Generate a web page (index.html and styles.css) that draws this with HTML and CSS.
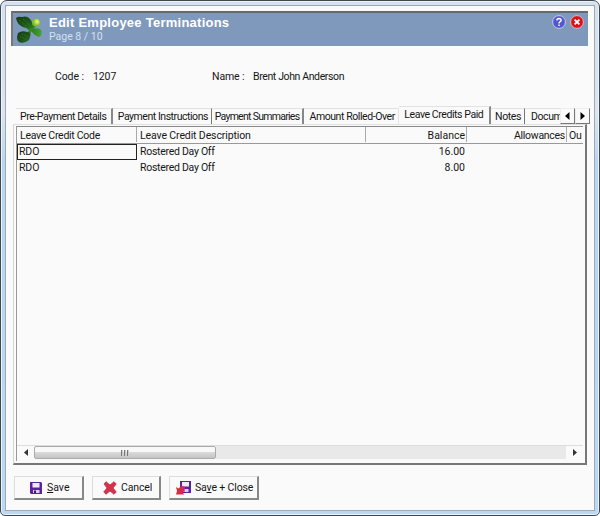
FILE: index.html
```html
<!DOCTYPE html>
<html lang="en">
<head>
<meta charset="utf-8">
<title>Edit Employee Terminations</title>
<link rel="stylesheet" href="styles.css">
</head>
<body>
<div class="window">
<main class="client">
  <header class="banner">
    <svg class="logo" viewBox="0 0 28 30">
      <defs>
        <linearGradient id="leaf" x2="1" y2="1"><stop offset="0" stop-color="#17391a"/><stop offset=".6" stop-color="#1d5618"/><stop offset="1" stop-color="#2d7d20"/></linearGradient>
        <radialGradient id="ball" cx=".65" cy=".4"><stop offset="0" stop-color="#f8ff55"/><stop offset="1" stop-color="#7fc02a"/></radialGradient>
        <linearGradient id="stem"><stop offset="0" stop-color="#1f6a1a"/><stop offset="1" stop-color="#46a32b"/></linearGradient>
      </defs>
      <path d="M12 11Q17 13 20 14.500Q25 13.500 26.500 17Q27 22 24 23Q20 22 17 18Q14 16 11 14Z" fill="url(#stem)"/>
      <path d="M12 19L17 12L20 9L22 11L17 16L14 22Z" fill="#358a25"/>
      <path d="M1 4Q3 2 7 3Q12 1.500 15 5Q18 8 18 14Q13 14.500 9 13.500Q2 11 1 4Z" fill="url(#leaf)"/>
      <path d="M3 19Q7 16 12 18Q17 18 15 23Q15 27 9 28.500Q2 30 2 23Z" fill="url(#leaf)"/>
      <path d="M4 6L11 12M8 5L14 11M5 22L12 26M7 20L13 23" stroke="#3b8a28" stroke-width=".7" stroke-dasharray="1 1"/>
      <circle cx="21" cy="8.500" r="3.800" fill="url(#ball)"/>
    </svg>
    <div class="titles">
      <h1>Edit Employee Terminations</h1>
      <p>Page 8 / 10</p>
    </div>
    <svg class="round" viewBox="0 0 14 14"><circle cx="7" cy="7" r="6.4" fill="#5357cf" stroke="#c3c9f2"/><path d="M4.8 5.4Q5 3.5 7 3.5Q9.2 3.6 9.1 5.3Q9 6.3 7.9 6.9Q7 7.4 7 8.4M7 9.5V11" fill="none" stroke="#fff" stroke-width="1.5"/></svg>
    <svg class="round" viewBox="0 0 14 14"><circle cx="7" cy="7" r="6.4" fill="#d8131c" stroke="#e5b3bd"/><path d="M4.6 4.6L9.4 9.4M9.4 4.6L4.6 9.4" stroke="#fff" stroke-width="1.8"/></svg>
  </header>

  <section class="info">
    <span class="code-label">Code :</span><span class="code">1207</span>
    <span class="name-label">Name :</span><span class="name">Brent John Anderson</span>
  </section>

  <nav class="tabs">
    <span class="tab t1 thick">Pre-Payment Details</span>
    <span class="tab t2">Payment Instructions</span>
    <span class="tab t3 thick">Payment Summaries</span>
    <span class="tab t4">Amount Rolled-Over</span>
    <span class="tab t5 active thick">Leave Credits Paid</span>
    <span class="tab t6">Notes</span>
    <span class="tab t7">Docum</span>
    <span class="arrow"><svg viewBox="0 0 5 8"><path d="M4.5 0V8L0 4Z"/></svg></span>
    <span class="arrow"><svg viewBox="0 0 5 8"><path d="M.5 0V8L5 4Z"/></svg></span>
  </nav>

  <section class="panel">
    <div class="grid">
      <div class="row head"><span>Leave Credit Code</span><span>Leave Credit Description</span><span>Balance</span><span>Allowances</span><span>Ou</span></div>
      <div class="row"><span class="selected">RDO</span><span>Rostered Day Off</span><span>16.00</span></div>
      <div class="row"><span>RDO</span><span>Rostered Day Off</span><span>8.00</span></div>
      <div class="scrollbar">
        <span class="step"><svg viewBox="0 0 4 7"><path d="M4 0V7L0 3.5Z"/></svg></span>
        <span class="thumb"><i></i><i></i><i></i></span>
        <span class="track"></span>
        <span class="step"><svg viewBox="0 0 4 7"><path d="M0 0V7L4 3.5Z"/></svg></span>
      </div>
    </div>
  </section>

  <footer class="actions">
    <button class="save"><svg width="12" height="12" viewBox="0 0 12 12"><path d="M0 0H11L12 1V12H1L0 11Z" fill="#5b22a0"/><path d="M2.500 1H9.500V5.500H2.500Z" fill="#eeeafa"/><path d="M3 8H9.500V11H3Z" fill="#d9d0ee"/><path d="M4 8.500H6V11H4Z" fill="#45157f"/></svg><span><u>S</u>ave</span></button>
    <button class="cancel"><svg width="14" height="14" viewBox="0 0 14 14"><path d="M1 3L3 .7L7 4L11 .7L13.3 3L10 7L13.3 11L11 13.3L7 10L3 13.3L.7 11L4 7Z" fill="#d9304c" stroke="#b12d43" stroke-width=".7"/></svg><span>Cancel</span></button>
    <button class="close"><svg width="15" height="14" viewBox="0 0 15 14"><path d="M4 0H15V12H4Z" fill="#5b22a0"/><path d="M6 1H13V5.500H6Z" fill="#eeeafa"/><path d="M7 8H12.500V11H7Z" fill="#d9d0ee"/><path d="M0 6L2.500 7.500L5.500 4.800L9 6L8.500 11L6.500 10.500L8 13.500H0L1 10Z" fill="#d62a48"/></svg><span>Sa<u>v</u>e + Close</span></button>
  </footer>
</main>
</div>
</body>
</html>
```
FILE: styles.css
```css
* { box-sizing: border-box; }
body { margin: 0; background: #fff; color: #161616; font: 10.5px/14px Roboto, "Liberation Sans", sans-serif; }
svg { display: block; flex: none; }
span { white-space: nowrap; }
.window { width: 600px; height: 516px; padding: 4px; border: 1px solid #41474d; border-radius: 7px 7px 5px 5px; background: linear-gradient(#d5e1ef 0, #dce5ef 22%, #b8d5f1 32%, #bcd8f2 100%); box-shadow: inset 0 0 0 1px #e8f3fc; }
.client { display: flex; flex-direction: column; height: 506px; padding: 5px 4px 0 5px; border: 1px solid #9daab5; background: #fafafa; }
.banner { display: flex; flex: none; width: 577px; height: 35px; padding: 2px 4px 0 2px; border-top: 2px solid #686868; border-left: 2px solid #777; background: #7f99bd; }
.logo { width: 28px; height: 30px; margin-top: -1px; }
.titles { flex: 1; margin-left: 6px; }
h1 { margin: 0; color: #fff; font: bold 13px/15px "Liberation Sans", sans-serif; letter-spacing: .25px; }
.titles p { margin: 0; color: #d4e0ef; line-height: 13px; }
.round { width: 14px; height: 14px; margin: 0 0 0 4px; }
.info { display: flex; height: 60px; padding: 24px 0 0 44px; }
.code-label { width: 38px; letter-spacing: -.1px; }
.code { width: 119px; letter-spacing: -.1px; }
.name-label { width: 41px; letter-spacing: -.1px; }
.name { letter-spacing: -.38px; }
.tabs { display: flex; flex: none; align-items: flex-end; height: 18px; padding-left: 5px; letter-spacing: -.42px; }
.tab { height: 16px; padding: 1px 0 0 5px; border-top: 1px solid #e2e2e2; border-right: 1px solid #777; }
.thick { border-right: 2px solid #888; }
.t1 { width: 97px; padding-left: 4px; }
.t2 { width: 99px; letter-spacing: -.46px; }
.t3 { width: 93px; padding-left: 3px; letter-spacing: -.72px; }
.t4 { width: 95px; border-right-color: #e4e4e4; }
.t5 { width: 92px; padding-left: 5px; }
.t6 { width: 34px; padding-left: 4px; }
.t7 { width: 35px; padding-left: 6px; border-right: 0; }
.active { height: 18px; }
.arrow { position: relative; display: grid; place-items: center; width: 15px; height: 16px; border: 1px solid; border-color: #eee #777 #777 #eee; background: #fafafa; }
.arrow svg { width: 5px; height: 8px; }
.panel { width: 574px; height: 341px; margin-left: 2px; padding: 1px 0 0 2px; border: solid; border-color: #e0e0e0 #777 #777 #d5d5d5; border-width: 1px 2px 2px 1px; }
.grid { display: flex; flex-direction: column; width: 567px; height: 335px; border-top: 1px solid #888; border-left: 1px solid #999; }
.row { display: grid; grid-template-columns: 120px 229px 101px 100px 16px; height: 16px; letter-spacing: -.28px; }
.row span { padding: 0 2px; line-height: 15px; }
.row span:nth-child(2) { padding-left: 3px; }
.row span:nth-child(3), .row span:nth-child(4) { padding-right: 1px; text-align: right; }
.row:not(.head) span:nth-child(3) { padding-right: 2px; letter-spacing: 0; }
.row:not(.head) span:first-child { letter-spacing: -.1px; }
.row.head { height: 17px; border-bottom: 1px solid #999; }
.row.head span { padding-top: 1px; border-right: 1px solid #aaa; height: 15px; }
.row.head span:first-child { padding-left: 3px; }
.row.head span:nth-child(2) { letter-spacing: -.12px; }
.row.head span:nth-child(3) { letter-spacing: 0; }
.row.head span:last-child { border: 0; }
.row .selected { border: 1px solid #222; padding: 0 1px; line-height: 13px; }
.scrollbar { display: flex; height: 14px; margin-top: auto; margin-bottom: 2px; border-top: 1px solid #ddd; }
.step { display: grid; place-items: center; width: 17px; }
.step svg { width: 4px; height: 7px; fill: #333; }
.thumb { display: flex; justify-content: center; align-items: center; gap: 1px; width: 182px; border: 1px solid #aaa; border-radius: 2px; background: linear-gradient(#f8f8f8 0 45%, #d9d9d9 50%, #c5c5c5); }
.thumb i { width: 2px; height: 6px; background: #777; border-right: 1px solid #ccc; }
.track { flex: 1; background: #e9e9e9; }
.actions { display: flex; gap: 8px; padding: 11px 0 0 3px; }
button { display: flex; align-items: center; height: 24px; padding: 0; border: solid; border-width: 1px 2px 2px 1px; border-color: #ddd #888 #888 #ddd; background: #fafafa; color: #161616; font: inherit; letter-spacing: -.15px; }
.save { width: 70px; padding-left: 15px; gap: 5px; letter-spacing: 0; }
.cancel { width: 69px; padding-left: 10px; gap: 4px; }
.close { width: 90px; padding-left: 6px; gap: 4px; }
```
